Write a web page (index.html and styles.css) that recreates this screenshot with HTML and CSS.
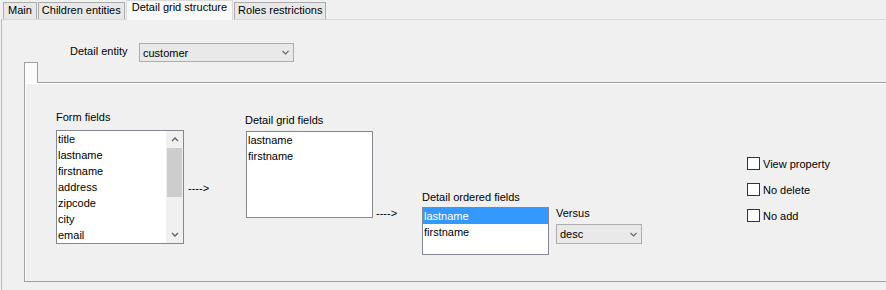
FILE: index.html
```html
<!doctype html>
<html>
<head>
    <meta charset="utf-8">
    <title>Detail grid structure</title>
    <link rel="stylesheet" href="styles.css">
</head>
<body>

<div class="tabs">
    <div class="tab tab-main">Main</div>
    <div class="tab">Children entities</div>
    <div class="tab active">Detail grid structure</div>
    <div class="tab">Roles restrictions</div>
</div>

<div class="panel">

    <div class="entity-row">
        <label class="entity-label">Detail entity</label>
        <div class="combo combo-entity">
            <span>customer</span>
            <svg width="7" height="5" viewBox="0 0 7 5"><path d="M0.5 1 L3.5 4 L6.5 1" fill="none" stroke="#6a6a6a" stroke-width="1.2"/></svg>
        </div>
    </div>

    <div class="group">
        <div class="group-head">
            <div class="group-tab"></div>
            <div class="group-fill"></div>
        </div>
        <div class="group-body">

            <div class="col col-form">
                <div class="caption">Form fields</div>
                <div class="list list-form">
                    <div class="items">
                        <div class="item">title</div>
                        <div class="item">lastname</div>
                        <div class="item">firstname</div>
                        <div class="item">address</div>
                        <div class="item">zipcode</div>
                        <div class="item">city</div>
                        <div class="item">email</div>
                    </div>
                    <div class="scrollbar">
                        <div class="sb-btn">
                            <svg width="8" height="5" viewBox="0 0 8 5"><path d="M1 4 L4 1 L7 4" fill="none" stroke="#606060" stroke-width="1.3"/></svg>
                        </div>
                        <div class="sb-thumb"></div>
                        <div class="sb-track"></div>
                        <div class="sb-btn">
                            <svg width="8" height="5" viewBox="0 0 8 5"><path d="M1 1 L4 4 L7 1" fill="none" stroke="#606060" stroke-width="1.3"/></svg>
                        </div>
                    </div>
                </div>
            </div>

            <div class="arrow arrow-one">----&gt;</div>

            <div class="col col-grid">
                <div class="caption">Detail grid fields</div>
                <div class="list list-grid">
                    <div class="items">
                        <div class="item">lastname</div>
                        <div class="item">firstname</div>
                    </div>
                </div>
            </div>

            <div class="arrow arrow-two">----&gt;</div>

            <div class="col col-order">
                <div class="caption">Detail ordered fields</div>
                <div class="list list-order">
                    <div class="items">
                        <div class="item selected">lastname</div>
                        <div class="item">firstname</div>
                    </div>
                </div>
            </div>

            <div class="col col-versus">
                <div class="caption">Versus</div>
                <div class="combo combo-versus">
                    <span>desc</span>
                    <svg width="7" height="5" viewBox="0 0 7 5"><path d="M0.5 1 L3.5 4 L6.5 1" fill="none" stroke="#6a6a6a" stroke-width="1.2"/></svg>
                </div>
            </div>

            <div class="col col-checks">
                <label class="check"><span class="box"></span>View property</label>
                <label class="check"><span class="box"></span>No delete</label>
                <label class="check"><span class="box"></span>No add</label>
            </div>

        </div>
    </div>

</div>

</body>
</html>
```

FILE: styles.css
```css
* {
    box-sizing: border-box;
}

body {
    margin: 0;
    background: #f0f0f0;
    color: #000;
    font-family: "Liberation Sans", Arial, sans-serif;
    font-size: 11px;
    overflow: hidden;
}

/* top tab bar */
.tabs {
    display: flex;
    align-items: flex-end;
    height: 19px;
    padding-left: 3px;
}

.tab {
    height: 17px;
    padding: 0 3px;
    line-height: 14px;
    border: 1px solid #acacac;
    border-bottom: none;
    background: #e8e8e8;
    margin-right: 1px;
}

.tab-main {
    padding: 0 4px;
}

.tab.active {
    position: relative;
    z-index: 1;
    height: 20px;
    margin-bottom: -1px;
    padding: 0 5px;
    line-height: 13px;
    background: #f9f9f9;
    border-color: #dadada;
}

.panel {
    width: 900px;
    height: 271px;
    margin-left: 1px;
    border-left: 1px solid #b9b9b9;
    border-top: 1px solid #d9d9d9;
}

/* detail entity row */
.entity-row {
    display: flex;
    align-items: flex-start;
    margin: 23px 0 0 68px;
}

.entity-label {
    width: 69px;
    line-height: 14px;
    margin-top: 1px;
}

.combo {
    display: flex;
    align-items: center;
    justify-content: space-between;
    border: 1px solid #adadad;
    background: #e9e9e9;
    padding: 0 4px 0 3px;
}

.combo-entity {
    width: 155px;
    height: 19px;
}

.combo-versus {
    width: 86px;
    height: 20px;
}

/* inner group box */
.group {
    margin-left: 22px;
}

.group-head {
    display: flex;
    height: 21px;
}

.group-tab {
    width: 14px;
    height: 21px;
    border: 1px solid #a0a0a0;
    border-bottom: none;
    background: #fbfbfb;
}

.group-fill {
    flex: 1;
    border-bottom: 1px solid #a0a0a0;
}

.group-body {
    display: flex;
    align-items: flex-start;
    height: 199px;
    border-left: 1px solid #a0a0a0;
    border-bottom: 1px solid #a0a0a0;
    box-shadow: inset 1px 1px 0 #fff;
}

.caption {
    line-height: 14px;
    white-space: nowrap;
}

.list {
    display: flex;
    background: #fff;
    border: 1px solid #828790;
}

.items {
    flex: 1;
}

.item {
    line-height: 16px;
    height: 16px;
    padding-left: 1px;
    white-space: nowrap;
}

.item.selected {
    background: #3399ff;
    color: #fff;
}

.scrollbar {
    display: flex;
    flex-direction: column;
    width: 17px;
    background: #f0f0f0;
}

.sb-btn {
    height: 17px;
    display: flex;
    align-items: center;
    justify-content: center;
}

.sb-thumb {
    height: 49px;
    margin: 0 1px;
    background: #cdcdcd;
}

.sb-track {
    flex: 1;
}

/* columns */
.col-form {
    margin: 27px 0 0 31px;
}

.col-form .caption {
    margin-bottom: 6px;
}

.list-form {
    width: 128px;
    height: 114px;
}

.arrow {
    line-height: 14px;
    white-space: nowrap;
}

.arrow-one {
    width: 58px;
    margin: 98px 0 0 4px;
}

.col-grid {
    margin-top: 30px;
}

.col-grid .caption {
    margin: 0 0 4px -1px;
}

.list-grid {
    width: 127px;
    height: 87px;
}

.arrow-two {
    width: 46px;
    margin: 123px 0 0 3px;
}

.col-order {
    margin-top: 107px;
}

.col-order .caption {
    margin-bottom: 3px;
}

.list-order {
    width: 127px;
    height: 48px;
}

.col-versus {
    margin: 123px 0 0 7px;
}

.col-versus .caption {
    margin-bottom: 4px;
}

.col-checks {
    display: flex;
    flex-direction: column;
    gap: 13px;
    margin: 74px 0 0 105px;
}

.check {
    display: flex;
    align-items: center;
    height: 13px;
    line-height: 14px;
}

.box {
    width: 13px;
    height: 13px;
    margin-right: 3px;
    border: 1px solid #333;
    background: #fff;
}
```
